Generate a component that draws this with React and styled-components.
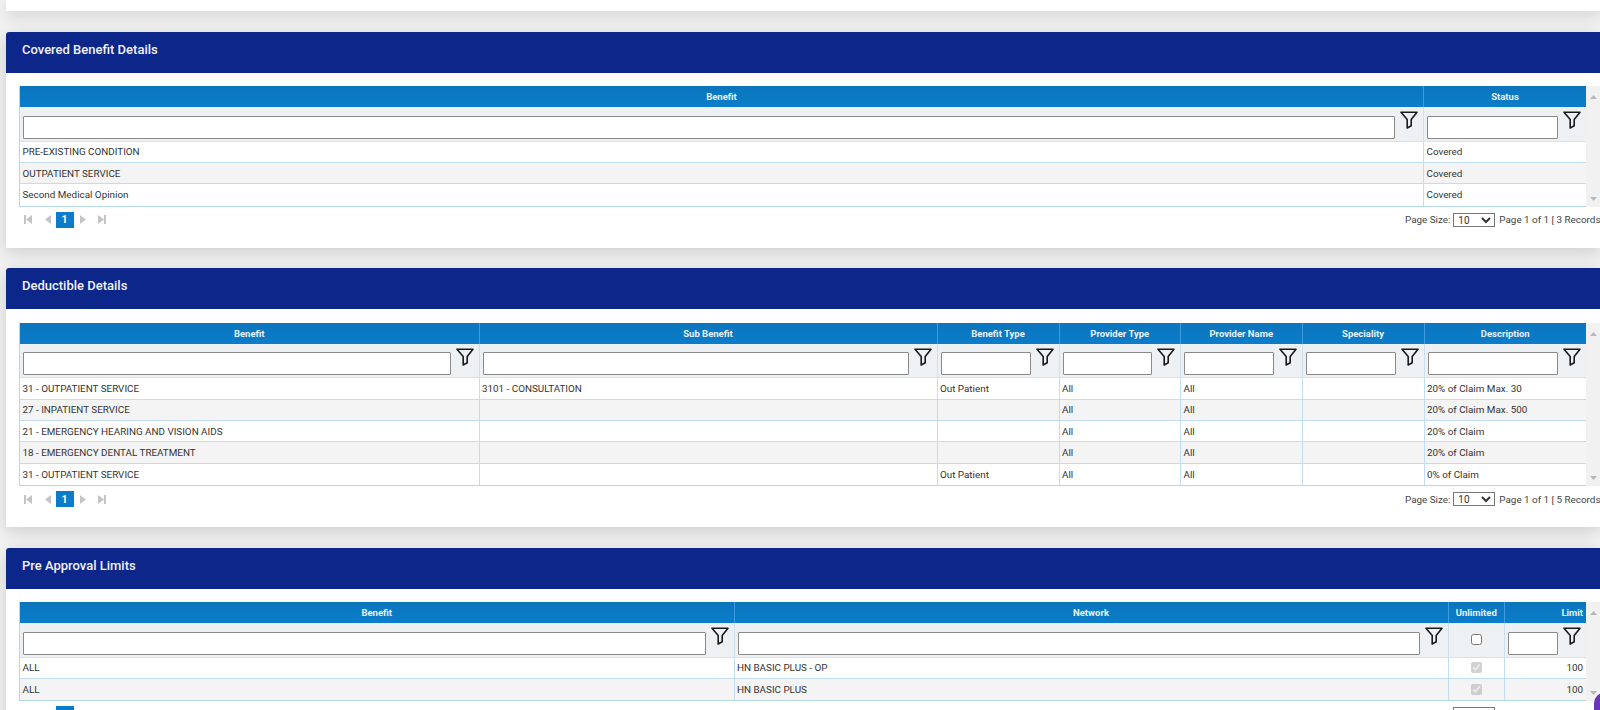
import styled, { createGlobalStyle } from "styled-components";

const GlobalStyle = createGlobalStyle`
  html, body {
    margin: 0;
    padding: 0;
    height: 710px;
    overflow: hidden;
    background: #f2f2f2;
    font-family: Roboto, "Liberation Sans", sans-serif;
  }
`;

const Page = styled.div`
  position: relative;
  width: 1600px;
  height: 710px;
  overflow: hidden;
`;
const TopCard = styled.div`
  height: 11px;
  margin-left: 6px;
  background: #fff;
  box-shadow: 0 4px 16px rgba(0, 0, 0, 0.16);
`;
const Card = styled.section`
  margin: 20.5px 0 0 6px;
  background: #fff;
  box-shadow: 0 4px 16px rgba(0, 0, 0, 0.16);
`;
const CardTitle = styled.h2`
  margin: 0;
  height: 41px;
  padding: 0 0 6px 16px;
  box-sizing: border-box;
  display: flex;
  align-items: center;
  background: #0c268a;
  border-radius: 3px 0 0 0;
  color: #f1f3fb;
  font-size: 13px;
  font-weight: 500;
`;
const CardBody = styled.div`
  padding: 13.5px 0 0 13px;
`;
const TableWrap = styled.div`
  display: flex;
`;
const Grid = styled.div`
  width: 1567px;
  border-left: 1px solid #b5d7ee;
  border-bottom: 1px solid #b5d7ee;
  box-sizing: border-box;
  color: #333;
  font-size: 9.85px;
`;
const Row = styled.div`
  display: grid;
  grid-template-columns: ${(props) => props.$cols};
`;
const HeadRow = styled(Row)`
  height: 21px;
  background: linear-gradient(#0b75bd, #0a7dca);
`;
const HeadCell = styled.div`
  display: flex;
  align-items: center;
  justify-content: ${(props) => (props.$right ? "flex-end" : "center")};
  padding-right: ${(props) => (props.$right ? "3px" : "0")};
  border-right: 1px solid #3f9be0;
  color: #e8f3fb;
  font-size: 9.5px;
  font-weight: 700;
  &:last-child {
    border-right: 0;
  }
`;
const FilterRow = styled(Row)`
  height: 34.5px;
  background: #eef1f4;
  border-bottom: 1px solid #d3e3ef;
  box-sizing: border-box;
`;
const FilterCell = styled.div`
  display: flex;
  gap: 5px;
  padding: 4px 5px 0 3px;
  border-right: 1px solid #cfe1ee;
  &:last-child {
    border-right: 0;
  }
`;
const CheckCell = styled(FilterCell)`
  justify-content: center;
  align-items: center;
  padding: 0;
`;
const FilterInput = styled.input`
  flex: 1;
  min-width: 0;
  height: 23px;
  margin-top: 4.5px;
  padding: 0;
  box-sizing: border-box;
  background: #fff;
  border: 1px solid #8a8a8a;
  border-radius: 1px;
`;
const FilterIcon = styled.svg`
  flex: none;
  width: 18px;
  height: 18px;
`;
const SmallCheck = styled.input`
  width: 11px;
  height: 11px;
  margin: 0;
`;
const DataRow = styled(Row)`
  height: 21.4px;
  background: ${(props) => (props.$alt ? "#f4f4f5" : "#fff")};
  border-bottom: 1px solid #c2ddf1;
  box-sizing: border-box;
  &:last-child {
    border-bottom: 0;
  }
`;
const DataCell = styled.div`
  display: flex;
  align-items: center;
  justify-content: ${(props) =>
    props.$right ? "flex-end" : props.$center ? "center" : "flex-start"};
  padding: 0 3px 0 2.5px;
  border-right: 1px solid #c2ddf1;
  white-space: nowrap;
  overflow: hidden;
  &:last-child {
    border-right: 0;
  }
`;
const ScrollBar = styled.div`
  flex: none;
  width: 14px;
  background: #f1f1f1;
  display: flex;
  flex-direction: column;
  justify-content: space-between;
  align-items: center;
  padding: 9px 0 6px;
  box-sizing: border-box;
`;
const ScrollArrow = styled.svg`
  width: 7px;
  height: 4px;
  fill: #b8b8b8;
`;
const Pager = styled.div`
  height: 41px;
  display: flex;
  align-items: flex-start;
  padding-top: 5px;
  box-sizing: border-box;
`;
const PageNav = styled.div`
  display: flex;
  align-items: center;
  height: 16px;
  margin-left: 4.5px;
`;
const NavIcon = styled.svg`
  width: 8px;
  height: 9px;
  margin: ${(props) => props.$margin};
  fill: #c4c4c4;
`;
const PageButton = styled.div`
  width: 18px;
  height: 16px;
  display: flex;
  align-items: center;
  justify-content: center;
  background: #0a7cc9;
  color: #fff;
  font-size: 10.5px;
  font-weight: 700;
`;
const PageInfo = styled.div`
  margin-left: auto;
  flex: none;
  width: 195px;
  display: flex;
  align-items: center;
  height: 16px;
  white-space: nowrap;
  color: #444;
  font-size: 9.85px;
`;
const SizeSelect = styled.select`
  flex: none;
  width: 42px;
  height: 14px;
  margin: 0 4px 0 3px;
  padding: 0;
  background: #fff;
  border: 1px solid #777;
  border-radius: 0;
  color: #333;
  font-family: inherit;
  font-size: 10px;
`;
const ChatBubble = styled.div`
  position: absolute;
  right: -22px;
  bottom: -22px;
  width: 28px;
  height: 39px;
  border-radius: 10px;
  background: #6a35b8;
`;

function Funnel() {
  return (
    <FilterIcon viewBox="0 0 18 18" fill="none" stroke="#1a1a1a" strokeWidth="1.6" strokeLinejoin="round">
      <path d="M1 1.2h16L11.2 8.6v6.2l-4 2.2V8.6z" />
    </FilterIcon>
  );
}

function Table({ cols, headers, rows, records }) {
  const template = cols.map((c) => `${c}px`).join(" ");

  return (
    <>
      <TableWrap>
        <Grid>
          <HeadRow $cols={template}>
            {headers.map((h) => (
              <HeadCell key={h.label} $right={h.right}>
                {h.label}
              </HeadCell>
            ))}
          </HeadRow>
          <FilterRow $cols={template}>
            {headers.map((h) =>
              h.check ? (
                <CheckCell key={h.label}>
                  <SmallCheck type="checkbox" readOnly />
                </CheckCell>
              ) : (
                <FilterCell key={h.label}>
                  <FilterInput type="text" readOnly />
                  <Funnel />
                </FilterCell>
              )
            )}
          </FilterRow>
          {rows.map((row, i) => (
            <DataRow key={i} $cols={template} $alt={i % 2 === 1}>
              {row.map((value, j) =>
                headers[j].check ? (
                  <DataCell key={j} $center>
                    <SmallCheck type="checkbox" checked disabled readOnly />
                  </DataCell>
                ) : (
                  <DataCell key={j} $right={headers[j].right}>
                    {value}
                  </DataCell>
                )
              )}
            </DataRow>
          ))}
        </Grid>
        <ScrollBar>
          <ScrollArrow viewBox="0 0 7 4">
            <path d="M3.5 0L7 4H0z" />
          </ScrollArrow>
          <ScrollArrow viewBox="0 0 7 4">
            <path d="M0 0h7L3.5 4z" />
          </ScrollArrow>
        </ScrollBar>
      </TableWrap>
      <Pager>
        <PageNav>
          <NavIcon viewBox="0 0 8 9" $margin="0 12px 0 0">
            <path d="M0 0h2v9H0zM8 0v9L2 4.5z" />
          </NavIcon>
          <NavIcon viewBox="0 0 8 9" $margin="0 4px 0 0">
            <path d="M7 0v9L1 4.5z" />
          </NavIcon>
          <PageButton>1</PageButton>
          <NavIcon viewBox="0 0 8 9" $margin="0 11px 0 5px">
            <path d="M1 0v9l6-4.5z" />
          </NavIcon>
          <NavIcon viewBox="0 0 8 9" $margin="0">
            <path d="M0 0v9l6-4.5zM6 0h2v9H6z" />
          </NavIcon>
        </PageNav>
        <PageInfo>
          Page Size:
          <SizeSelect defaultValue="10">
            <option>10</option>
            <option>20</option>
            <option>50</option>
          </SizeSelect>
          Page 1 of 1 [ {records} Records ]
        </PageInfo>
      </Pager>
    </>
  );
}

const covered = {
  cols: [1404, 162],
  headers: [{ label: "Benefit" }, { label: "Status" }],
  rows: [
    ["PRE-EXISTING CONDITION", "Covered"],
    ["OUTPATIENT SERVICE", "Covered"],
    ["Second Medical Opinion", "Covered"],
  ],
  records: 3,
};

const deductible = {
  cols: [459.5, 458, 122, 121.5, 121.5, 122, 161.5],
  headers: [
    { label: "Benefit" },
    { label: "Sub Benefit" },
    { label: "Benefit Type" },
    { label: "Provider Type" },
    { label: "Provider Name" },
    { label: "Speciality" },
    { label: "Description" },
  ],
  rows: [
    ["31 - OUTPATIENT SERVICE", "3101 - CONSULTATION", "Out Patient", "All", "All", "", "20% of Claim Max. 30"],
    ["27 - INPATIENT SERVICE", "", "", "All", "All", "", "20% of Claim Max. 500"],
    ["21 - EMERGENCY HEARING AND VISION AIDS", "", "", "All", "All", "", "20% of Claim"],
    ["18 - EMERGENCY DENTAL TREATMENT", "", "", "All", "All", "", "20% of Claim"],
    ["31 - OUTPATIENT SERVICE", "", "Out Patient", "All", "All", "", "0% of Claim"],
  ],
  records: 5,
};

const preApproval = {
  cols: [714.5, 714, 56.5, 81],
  headers: [
    { label: "Benefit" },
    { label: "Network" },
    { label: "Unlimited", check: true },
    { label: "Limit", right: true },
  ],
  rows: [
    ["ALL", "HN BASIC PLUS - OP", "", "100"],
    ["ALL", "HN BASIC PLUS", "", "100"],
  ],
  records: 2,
};

function App() {
  return (
    <Page>
      <GlobalStyle />
      <TopCard />
      <Card>
        <CardTitle>Covered Benefit Details</CardTitle>
        <CardBody>
          <Table {...covered} />
        </CardBody>
      </Card>
      <Card>
        <CardTitle>Deductible Details</CardTitle>
        <CardBody>
          <Table {...deductible} />
        </CardBody>
      </Card>
      <Card>
        <CardTitle>Pre Approval Limits</CardTitle>
        <CardBody>
          <Table {...preApproval} />
        </CardBody>
      </Card>
      <ChatBubble />
    </Page>
  );
}

export default App;
